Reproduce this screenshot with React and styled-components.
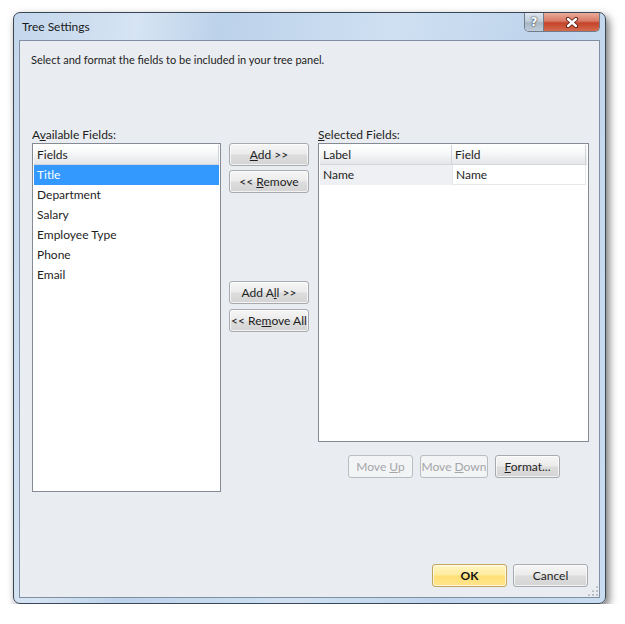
import React from 'react';
import styled, { createGlobalStyle, css } from 'styled-components';

const GlobalStyle = createGlobalStyle`
    html, body {
        margin: 0;
        background: #ffffff;
    }
    body {
        font-family: Lato, "Liberation Sans", sans-serif;
        font-size: 12px;
        color: #1e1e1e;
    }
`;

const Stage = styled.div`
    padding: 12px 0 0 13px;
`;

const Window = styled.div`
    box-sizing: border-box;
    width: 593px;
    height: 592px;
    border: 1px solid #3b4654;
    border-radius: 7px;
    padding: 0 5px 5px;
    display: flex;
    flex-direction: column;
    background: linear-gradient(100deg, #c3d6ec 0%, #d6e4f3 18%, #bcd2ea 30%, #cfe0f2 55%, #c0d5ec 75%, #cadcf0 100%);
    box-shadow: 3px 4px 9px rgba(0, 0, 0, 0.55);
`;

const TitleBar = styled.div`
    height: 27px;
    display: flex;
    justify-content: space-between;
    align-items: flex-start;
`;

const Title = styled.div`
    padding: 6px 0 0 3px;
    font-size: 12px;
    color: #1a1a1a;
`;

const CaptionButtons = styled.div`
    display: flex;
    height: 18px;
    border: 1px solid #6e7c8c;
    border-top: none;
    border-radius: 0 0 5px 5px;
    overflow: hidden;
`;

const CaptionButton = styled.div`
    display: flex;
    align-items: center;
    justify-content: center;
    font-family: "DejaVu Sans", sans-serif;
    font-weight: bold;
    color: #fff;
    ${({ $close }) => $close
        ? css`
            width: 55px;
            background: linear-gradient(#eaab9a 0%, #d77a63 45%, #c4432a 55%, #d46a4d 100%);
        `
        : css`
            width: 18px;
            border-right: 1px solid #6e7c8c;
            background: linear-gradient(#dfe7ef 0%, #c3ced9 45%, #a9b7c5 55%, #c0ccd8 100%);
            font-size: 12px;
            text-shadow: 0 0 2px #2d3a48, 0 0 1px #2d3a48;
        `}
`;

const Client = styled.div`
    position: relative;
    flex: 1;
    border: 1px solid #7f8ea1;
    background: #e9ecf0;
    display: flex;
    flex-direction: column;
    padding: 11px 10px 10px 12px;
`;

const Intro = styled.div`
    margin-left: -1px;
    font-size: 11px;
    line-height: 15px;
`;

const Main = styled.div`
    display: flex;
    margin-top: 60px;
`;

const Column = styled.div`
    display: flex;
    flex-direction: column;
    flex-shrink: 0;
    width: ${({ $w }) => $w}px;
    margin-left: ${({ $ml }) => $ml || 0}px;
`;

const FieldLabel = styled.div`
    line-height: 15px;
    margin-bottom: 1px;
`;

const Key = styled.span`
    text-decoration: underline;
`;

const ListBox = styled.div`
    box-sizing: border-box;
    height: ${({ $h }) => $h}px;
    border: 1px solid #858b94;
    background: #fff;
    padding: 1px;
`;

const HeaderRow = styled.div`
    display: flex;
    height: 19px;
    background: linear-gradient(#ffffff 0%, #f7f8f9 40%, #e4e6e9 100%);
    border-bottom: 1px solid #d2d5da;
`;

const HeaderCell = styled.div`
    box-sizing: border-box;
    width: ${({ $w }) => $w};
    padding-left: 3px;
    line-height: 19px;
    border-right: 1px solid #d0d4da;
`;

const ListItem = styled.div`
    height: 20px;
    line-height: 20px;
    padding-left: 3px;
    ${({ $selected }) => $selected && css`
        background: #3399ff;
        color: #fff;
    `}
`;

const GridRow = styled.div`
    display: flex;
    height: 20px;
`;

const GridCell = styled.div`
    box-sizing: border-box;
    width: ${({ $w }) => $w};
    line-height: 19px;
    padding-left: 3px;
    ${({ $edit }) => $edit
        ? css`
            background: #fff;
            border: 1px solid #e6e8eb;
            border-top: none;
        `
        : css`
            background: #eef0f3;
        `}
`;

const Button = styled.button`
    box-sizing: border-box;
    width: ${({ $w }) => $w}px;
    height: 23px;
    padding: 0;
    white-space: nowrap;
    font-family: inherit;
    font-size: 12px;
    border-radius: 3px;
    border: 1px solid #a7abb0;
    color: #1e1e1e;
    background: linear-gradient(#f6f6f6 0%, #ebebeb 48%, #dddddd 52%, #d4d4d4 100%);
    box-shadow: inset 0 0 0 1px rgba(255, 255, 255, 0.7);
    ${({ $default }) => $default && css`
        border-color: #c5a45b;
        background: linear-gradient(#fff5c8 0%, #ffeb9b 48%, #ffdf75 52%, #ffe48c 100%);
        font-weight: bold;
        color: #111;
    `}
    &:disabled {
        color: #a3a6aa;
        border-color: #b9bdc1;
        background: #f3f4f5;
        box-shadow: none;
    }
`;

const ButtonStack = styled.div`
    display: flex;
    flex-direction: column;
    gap: ${({ $gap }) => $gap}px;
    margin-top: ${({ $mt }) => $mt}px;
`;

const ButtonRow = styled.div`
    display: flex;
    justify-content: ${({ $justify }) => $justify || 'flex-start'};
    gap: ${({ $gap }) => $gap}px;
    margin-top: ${({ $mt }) => $mt || 0}px;
    padding-left: ${({ $pl }) => $pl || 0}px;
`;

const Footer = styled(ButtonRow)`
    margin-top: auto;
    padding-right: 1px;
`;

const Grip = styled.div`
    position: absolute;
    right: 1px;
    bottom: 1px;
    width: 11px;
    height: 11px;
    background-image: radial-gradient(circle, #b8bfc8 1px, transparent 1.2px);
    background-size: 4px 4px;
    clip-path: polygon(100% 0, 100% 100%, 0 100%);
`;

const CloseGlyph = () => (
    <svg width="14" height="11" viewBox="0 0 14 11">
        <path d="M3 2 L11 9 M11 2 L3 9" stroke="#5b1a0e" strokeWidth="4.2" strokeLinecap="round" fill="none" />
        <path d="M3 2 L11 9 M11 2 L3 9" stroke="#ffffff" strokeWidth="2.4" strokeLinecap="round" fill="none" />
    </svg>
);

const fields = ['Title', 'Department', 'Salary', 'Employee Type', 'Phone', 'Email'];

export default function App() {
    return (
        <Stage>
            <GlobalStyle />
            <Window>
                <TitleBar>
                    <Title>Tree Settings</Title>
                    <CaptionButtons>
                        <CaptionButton>?</CaptionButton>
                        <CaptionButton $close><CloseGlyph /></CaptionButton>
                    </CaptionButtons>
                </TitleBar>
                <Client>
                    <Intro>Select and format the fields to be included in your tree panel.</Intro>
                    <Main>
                        <Column $w={189}>
                            <FieldLabel>A<Key>v</Key>ailable Fields:</FieldLabel>
                            <ListBox $h={349}>
                                <HeaderRow>
                                    <HeaderCell $w="100%">Fields</HeaderCell>
                                </HeaderRow>
                                {fields.map((f, i) => (
                                    <ListItem key={f} $selected={i === 0}>{f}</ListItem>
                                ))}
                            </ListBox>
                        </Column>
                        <Column $w={80} $ml={8}>
                            <ButtonStack $gap={4} $mt={16}>
                                <Button $w={80}><Key>A</Key>dd &gt;&gt;</Button>
                                <Button $w={80}>&lt;&lt; <Key>R</Key>emove</Button>
                            </ButtonStack>
                            <ButtonStack $gap={5} $mt={88}>
                                <Button $w={80}>Add A<Key>l</Key>l &gt;&gt;</Button>
                                <Button $w={80}>&lt;&lt; Re<Key>m</Key>ove All</Button>
                            </ButtonStack>
                        </Column>
                        <Column $w={271} $ml={9}>
                            <FieldLabel><Key>S</Key>elected Fields:</FieldLabel>
                            <ListBox $h={299}>
                                <HeaderRow>
                                    <HeaderCell $w="132px">Label</HeaderCell>
                                    <HeaderCell $w="134px">Field</HeaderCell>
                                </HeaderRow>
                                <GridRow>
                                    <GridCell $w="132px">Name</GridCell>
                                    <GridCell $w="134px" $edit>Name</GridCell>
                                </GridRow>
                            </ListBox>
                            <ButtonRow $gap={7} $mt={13} $pl={30}>
                                <Button $w={65} disabled>Move <Key>U</Key>p</Button>
                                <Button $w={68} disabled>Move <Key>D</Key>own</Button>
                                <Button $w={65}><Key>F</Key>ormat...</Button>
                            </ButtonRow>
                        </Column>
                    </Main>
                    <Footer $justify="flex-end" $gap={6}>
                        <Button $w={75} $default>OK</Button>
                        <Button $w={75}>Cancel</Button>
                    </Footer>
                    <Grip />
                </Client>
            </Window>
        </Stage>
    );
}
